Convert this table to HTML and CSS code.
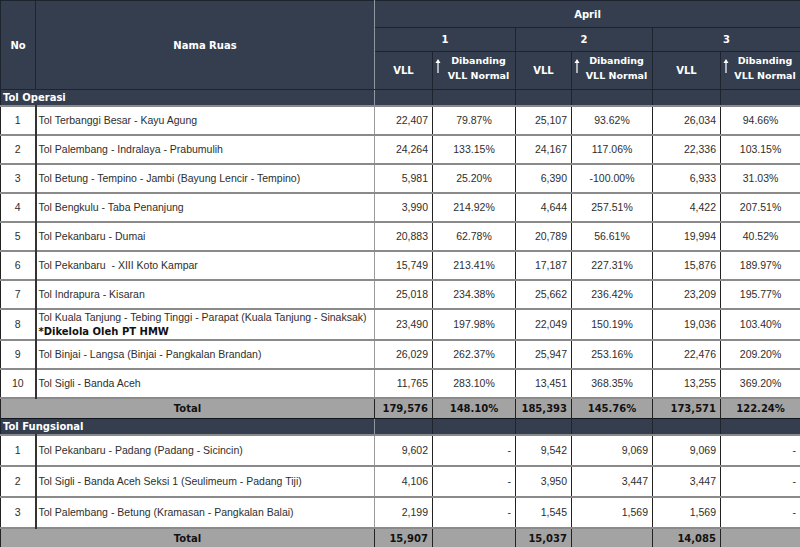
FILE: index.html
```html
<!DOCTYPE html>
<html lang="id">
<head>
<meta charset="utf-8">
<title>VLL April</title>
<link rel="stylesheet" href="styles.css">
</head>
<body>
<table class="grid">
  <colgroup>
    <col class="c-no"><col class="c-nama"><col class="c-v1"><col class="c-d1"><col class="c-v2"><col class="c-d2"><col class="c-v3"><col class="c-d3">
  </colgroup>
  <thead>
    <tr class="h-month">
      <th rowspan="3" class="hd no-h">No</th>
      <th rowspan="3" class="hd nama-h">Nama Ruas</th>
      <th colspan="6" class="hd">April</th>
    </tr>
    <tr class="h-day">
      <th colspan="2" class="hd">1</th>
      <th colspan="2" class="hd">2</th>
      <th colspan="2" class="hd">3</th>
    </tr>
    <tr class="h-sub">
      <th class="hd">VLL</th>
      <th class="hd dibh"><div class="dib"><svg class="arr" width="6" height="15" viewBox="0 0 6 15"><path d="M3 1 L5.5 5 H3.6 V15 H2.4 V5 H0.5 Z" fill="#fff"/></svg><span>Dibanding<br>VLL Normal</span></div></th>
      <th class="hd">VLL</th>
      <th class="hd dibh"><div class="dib"><svg class="arr" width="6" height="15" viewBox="0 0 6 15"><path d="M3 1 L5.5 5 H3.6 V15 H2.4 V5 H0.5 Z" fill="#fff"/></svg><span>Dibanding<br>VLL Normal</span></div></th>
      <th class="hd">VLL</th>
      <th class="hd dibh"><div class="dib"><svg class="arr" width="6" height="15" viewBox="0 0 6 15"><path d="M3 1 L5.5 5 H3.6 V15 H2.4 V5 H0.5 Z" fill="#fff"/></svg><span>Dibanding<br>VLL Normal</span></div></th>
    </tr>
  </thead>
  <tbody>
    <tr class="sec"><td colspan="2" class="sec-label">Tol Operasi</td><td></td><td></td><td></td><td></td><td></td><td></td></tr>
    <tr class="r"><td class="no">1</td><td class="nama">Tol Terbanggi Besar - Kayu Agung</td><td class="v">22,407</td><td class="p">79.87%</td><td class="v">25,107</td><td class="p">93.62%</td><td class="v">26,034</td><td class="p">94.66%</td></tr>
    <tr class="r"><td class="no">2</td><td class="nama">Tol Palembang - Indralaya - Prabumulih</td><td class="v">24,264</td><td class="p">133.15%</td><td class="v">24,167</td><td class="p">117.06%</td><td class="v">22,336</td><td class="p">103.15%</td></tr>
    <tr class="r"><td class="no">3</td><td class="nama">Tol Betung - Tempino - Jambi (Bayung Lencir - Tempino)</td><td class="v">5,981</td><td class="p">25.20%</td><td class="v">6,390</td><td class="p">-100.00%</td><td class="v">6,933</td><td class="p">31.03%</td></tr>
    <tr class="r"><td class="no">4</td><td class="nama">Tol Bengkulu - Taba Penanjung</td><td class="v">3,990</td><td class="p">214.92%</td><td class="v">4,644</td><td class="p">257.51%</td><td class="v">4,422</td><td class="p">207.51%</td></tr>
    <tr class="r"><td class="no">5</td><td class="nama">Tol Pekanbaru - Dumai</td><td class="v">20,883</td><td class="p">62.78%</td><td class="v">20,789</td><td class="p">56.61%</td><td class="v">19,994</td><td class="p">40.52%</td></tr>
    <tr class="r"><td class="no">6</td><td class="nama">Tol Pekanbaru &nbsp;- XIII Koto Kampar</td><td class="v">15,749</td><td class="p">213.41%</td><td class="v">17,187</td><td class="p">227.31%</td><td class="v">15,876</td><td class="p">189.97%</td></tr>
    <tr class="r"><td class="no">7</td><td class="nama">Tol Indrapura - Kisaran</td><td class="v">25,018</td><td class="p">234.38%</td><td class="v">25,662</td><td class="p">236.42%</td><td class="v">23,209</td><td class="p">195.77%</td></tr>
    <tr class="r"><td class="no">8</td><td class="nama two">Tol Kuala Tanjung - Tebing Tinggi - Parapat (Kuala Tanjung - Sinaksak)<br><b class="note">*Dikelola Oleh PT HMW</b></td><td class="v">23,490</td><td class="p">197.98%</td><td class="v">22,049</td><td class="p">150.19%</td><td class="v">19,036</td><td class="p">103.40%</td></tr>
    <tr class="r"><td class="no">9</td><td class="nama">Tol Binjai - Langsa (Binjai - Pangkalan Brandan)</td><td class="v">26,029</td><td class="p">262.37%</td><td class="v">25,947</td><td class="p">253.16%</td><td class="v">22,476</td><td class="p">209.20%</td></tr>
    <tr class="r"><td class="no">10</td><td class="nama">Tol Sigli - Banda Aceh</td><td class="v">11,765</td><td class="p">283.10%</td><td class="v">13,451</td><td class="p">368.35%</td><td class="v">13,255</td><td class="p">369.20%</td></tr>
    <tr class="tot"><td colspan="2" class="tot-label">Total</td><td class="v">179,576</td><td class="p">148.10%</td><td class="v">185,393</td><td class="p">145.76%</td><td class="v">173,571</td><td class="p">122.24%</td></tr>
    <tr class="sec"><td colspan="2" class="sec-label">Tol Fungsional</td><td></td><td></td><td></td><td></td><td></td><td></td></tr>
    <tr class="r f"><td class="no">1</td><td class="nama">Tol Pekanbaru - Padang (Padang - Sicincin)</td><td class="v">9,602</td><td class="v">-</td><td class="v">9,542</td><td class="v">9,069</td><td class="v">9,069</td><td class="v">-</td></tr>
    <tr class="r f"><td class="no">2</td><td class="nama">Tol Sigli - Banda Aceh Seksi 1 (Seulimeum - Padang Tiji)</td><td class="v">4,106</td><td class="v">-</td><td class="v">3,950</td><td class="v">3,447</td><td class="v">3,447</td><td class="v">-</td></tr>
    <tr class="r f"><td class="no">3</td><td class="nama">Tol Palembang - Betung (Kramasan - Pangkalan Balai)</td><td class="v">2,199</td><td class="v">-</td><td class="v">1,545</td><td class="v">1,569</td><td class="v">1,569</td><td class="v">-</td></tr>
    <tr class="tot"><td colspan="2" class="tot-label">Total</td><td class="v">15,907</td><td></td><td class="v">15,037</td><td></td><td class="v">14,085</td><td></td></tr>
  </tbody>
</table>
</body>
</html>
```

FILE: styles.css
```css
html, body {
  margin: 0;
  padding: 0;
  background: #ffffff;
}

.grid {
  border-collapse: collapse;
  table-layout: fixed;
  width: 800px;
  font-family: "Liberation Sans", Arial, sans-serif;
  font-size: 10.5px;
  color: #2e2e2e;
}

.c-no { width: 35px; }
.c-nama { width: 339px; }
.c-v1 { width: 58px; }
.c-d1 { width: 83px; }
.c-v2 { width: 56px; }
.c-d2 { width: 81px; }
.c-v3 { width: 68px; }
.c-d3 { width: 80px; }

td, th {
  padding: 0 4px;
  overflow: hidden;
  white-space: nowrap;
}

.hd {
  background: #343e4e;
  color: #ffffff;
  font-family: "DejaVu Sans", Verdana, sans-serif;
  font-weight: bold;
  font-size: 10px;
  border: 1px solid #1d2430;
  text-align: center;
  vertical-align: middle;
}

.nama-h { border-right: 1px solid #8f97a3; }

.h-month { height: 27px; }
.h-day { height: 24px; }
.h-sub { height: 38px; }

.dibh { padding: 0 2px 5px; }

.dib {
  display: flex;
  align-items: flex-start;
  gap: 3px;
  font-size: 9.5px;
  line-height: 15px;
}

.dib span { flex: 1; text-align: center; }

.arr { margin-top: 5px; flex: none; }

.sec { height: 16px; }

.sec td {
  background: #343e4e;
  border-left: 1px solid #1d2430;
  border-right: 1px solid #1d2430;
  border-top: 1px solid #10151d;
}

.sec .sec-label {
  color: #ffffff;
  font-family: "DejaVu Sans", Verdana, sans-serif;
  font-weight: bold;
  font-size: 10px;
  padding: 0 2px;
  text-align: left;
  border-right: 1px solid #8f97a3;
}

.r { height: 29px; }
.r.f { height: 31px; }

.r td {
  border-top: 2px solid #8a8a8a;
  border-left: 1px solid #222222;
  border-right: 1px solid #222222;
}

.r .no {
  text-align: center;
  border-right: 2px solid #333333;
}

.r .nama {
  text-align: left;
  padding-left: 2px;
  border-right: 1px solid #9a9a9a;
}

.r .two { line-height: 14px; }

.note {
  font-family: "DejaVu Sans", Verdana, sans-serif;
  font-size: 10px;
  color: #111111;
}

.v { text-align: right; padding-right: 4px; }
.p { text-align: center; }

.tot { height: 21px; }

.tot td {
  background: #a3a3a3;
  font-family: "DejaVu Sans", Verdana, sans-serif;
  font-weight: bold;
  font-size: 10px;
  color: #111111;
  border-top: 2px solid #8a8a8a;
  border-left: 1px solid #222222;
  border-right: 1px solid #222222;
}

.tot .tot-label { text-align: center; }
```
